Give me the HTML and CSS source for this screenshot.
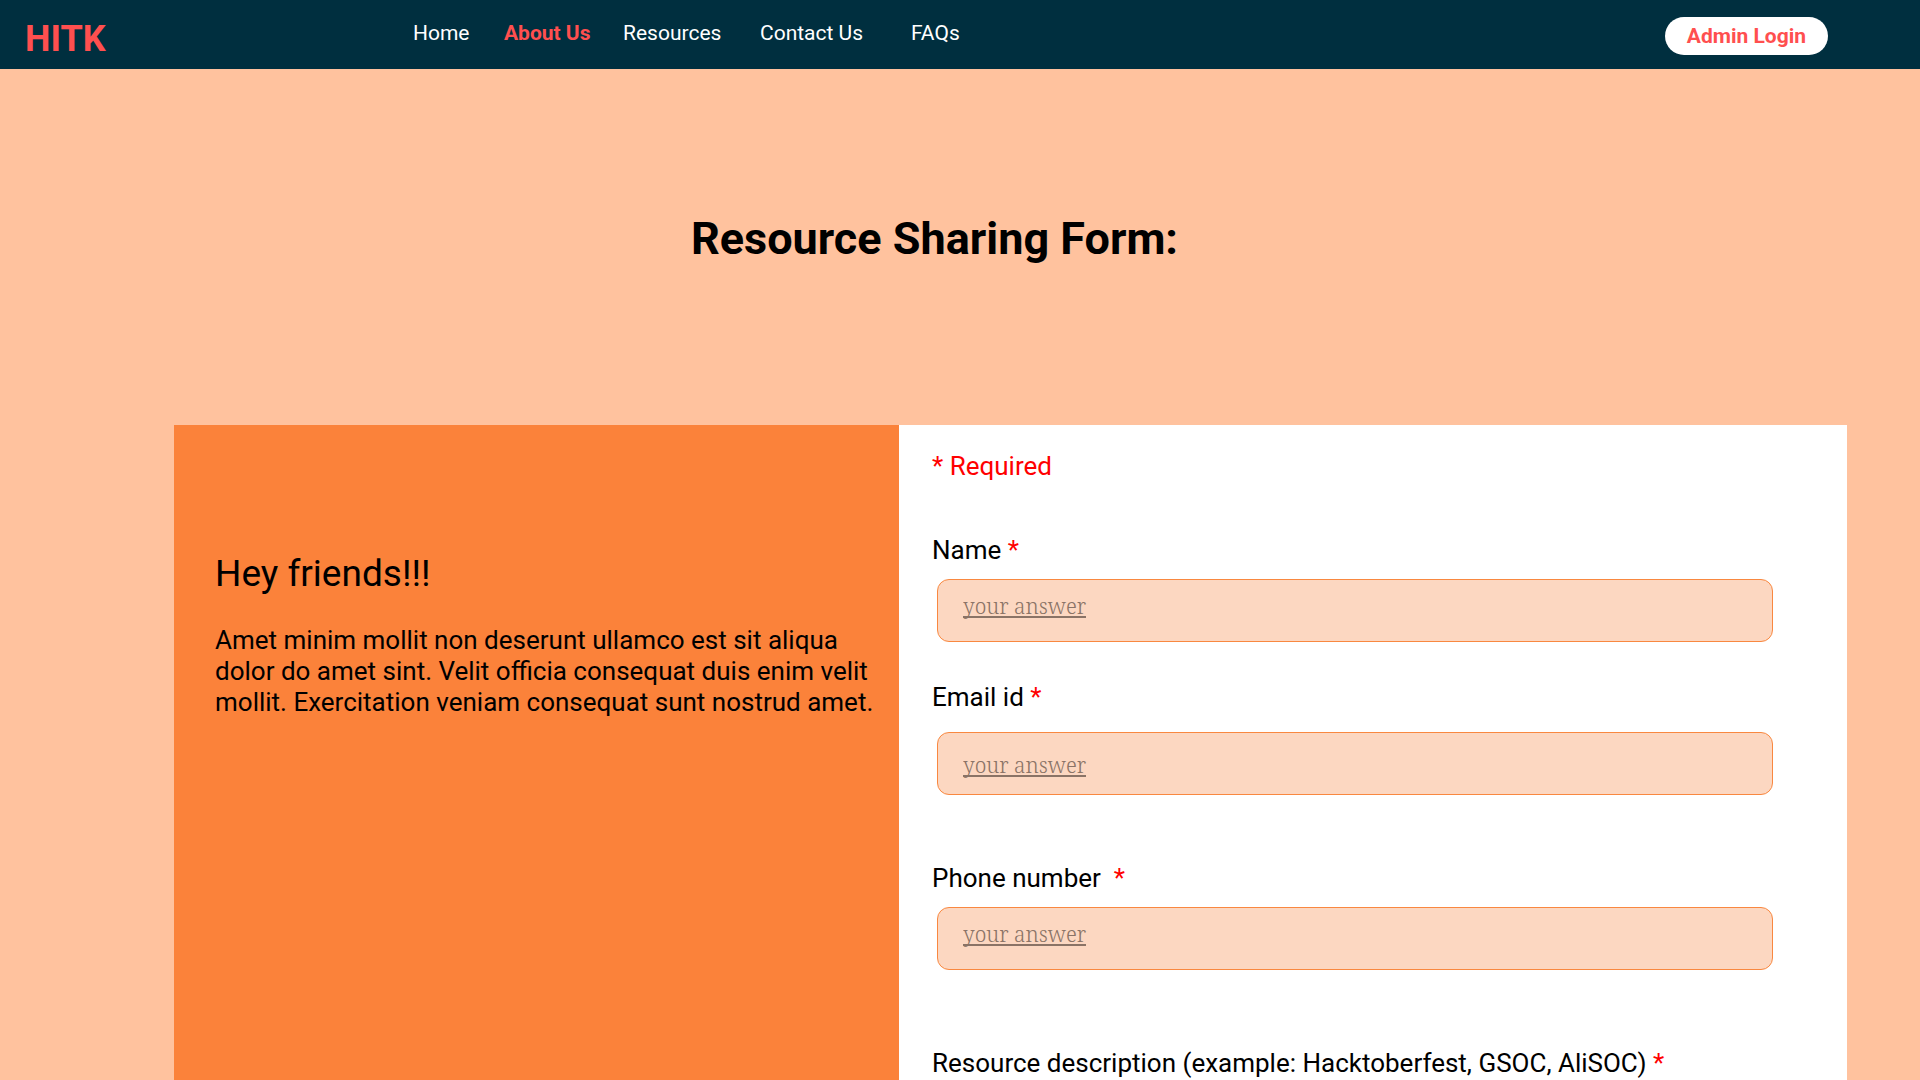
FILE: index.html
```html
<!DOCTYPE html>
<html lang="en">
<head>
  <meta charset="utf-8">
  <meta name="viewport" content="width=device-width, initial-scale=1">
  <title>Resource Sharing Form</title>
  <link rel="stylesheet" href="styles.css">
</head>
<body>
  <header class="topbar">
    <a class="logo" href="#">HITK</a>
    <nav class="menu">
      <a class="menu-link" href="#">Home</a>
      <a class="menu-link menu-link-active" href="#">About Us</a>
      <a class="menu-link" href="#">Resources</a>
      <a class="menu-link" href="#">Contact Us</a>
      <a class="menu-link" href="#">FAQs</a>
    </nav>
    <button class="login" type="button">Admin Login</button>
  </header>

  <main class="page">
    <h1 class="title">Resource Sharing Form:</h1>
    <div class="card">
      <section class="intro">
        <h2 class="intro-title">Hey friends!!!</h2>
        <p class="intro-text">Amet minim mollit non deserunt ullamco est sit aliqua dolor do amet sint. Velit officia consequat duis enim velit mollit. Exercitation veniam consequat sunt nostrud amet.</p>
      </section>
      <form class="form">
        <p class="required-note">* Required</p>
        <div class="field field-name">
          <label class="label" for="name">Name <span class="star">*</span></label>
          <input class="input input-raised" id="name" type="text" placeholder="your answer" required>
        </div>
        <div class="field field-email">
          <label class="label" for="email">Email id <span class="star">*</span></label>
          <input class="input" id="email" type="email" placeholder="your answer" required>
        </div>
        <div class="field field-phone">
          <label class="label" for="phone">Phone number&nbsp; <span class="star">*</span></label>
          <input class="input input-raised" id="phone" type="tel" placeholder="your answer" required>
        </div>
        <div class="field">
          <label class="label" for="description">Resource description (example: Hacktoberfest, GSOC, AliSOC) <span class="star">*</span></label>
          <input class="input" id="description" type="text" placeholder="your answer" required>
        </div>
      </form>
    </div>
  </main>
</body>
</html>
```
FILE: styles.css
```css
* {
  box-sizing: border-box;
}

body {
  margin: 0;
  background: #ffc29e;
  color: #000;
  font-family: Roboto, "Liberation Sans", sans-serif;
}

h1,
h2,
p {
  margin: 0;
}

.topbar {
  display: flex;
  align-items: flex-start;
  padding: 17px 92px 8px 25px;
  background: #002f3f;
}

.logo {
  width: 388px;
  color: #ff4f4f;
  font-size: 36px;
  font-weight: 700;
  line-height: 44px;
  text-decoration: none;
}

.menu {
  display: grid;
  grid-template-columns: 91px 119px 137px 151px auto;
  line-height: 32px;
}

.menu-link {
  color: #fff;
  font-size: 21px;
  text-decoration: none;
}

.menu-link-active {
  color: #ff4f4f;
  font-weight: 700;
}

.login {
  margin-left: auto;
  padding: 0 22px;
  border: 0;
  border-radius: 19px;
  background: #fff;
  color: #ff4f4f;
  font-family: inherit;
  font-size: 21px;
  font-weight: 700;
  line-height: 38px;
}

.page {
  padding: 144px 73px 0 174px;
}

.title {
  padding-right: 152px;
  font-size: 45px;
  font-weight: 700;
  line-height: 52px;
  text-align: center;
}

.card {
  display: grid;
  grid-template-columns: 725fr 948fr;
  margin-top: 160px;
}

.intro {
  padding: 129px 16px 0 41px;
  background: #fb823a;
}

.intro-title {
  font-size: 37px;
  font-weight: 400;
  line-height: 40px;
}

.intro-text {
  margin-top: 31px;
  font-size: 26px;
  line-height: 31px;
}

.form {
  padding: 26px 74px 60px 33px;
  background: #fff;
}

.required-note {
  color: #f00;
  font-size: 26px;
  line-height: 30px;
}

.field {
  display: flex;
  flex-direction: column;
  gap: 14px;
  margin-top: 78px;
}

.field-name {
  margin-top: 54px;
}

.field-email {
  gap: 20px;
  margin-top: 40px;
}

.field-phone {
  margin-top: 68px;
}

.label {
  font-size: 26px;
  line-height: 30px;
}

.star {
  color: #f00;
}

.input {
  height: 63px;
  margin-left: 5px;
  padding: 2px 25px 0;
  border: 1px solid #f98840;
  border-radius: 12px;
  background: #fcd7c1;
  color: #000;
  font-family: "Noto Serif", "Liberation Serif", serif;
  font-size: 21px;
  font-weight: 300;
}

.input-raised {
  padding-top: 0;
  padding-bottom: 10px;
}

.input::placeholder {
  color: #8a7366;
  text-decoration: underline;
  text-decoration-skip-ink: none;
  opacity: 1;
}
```
